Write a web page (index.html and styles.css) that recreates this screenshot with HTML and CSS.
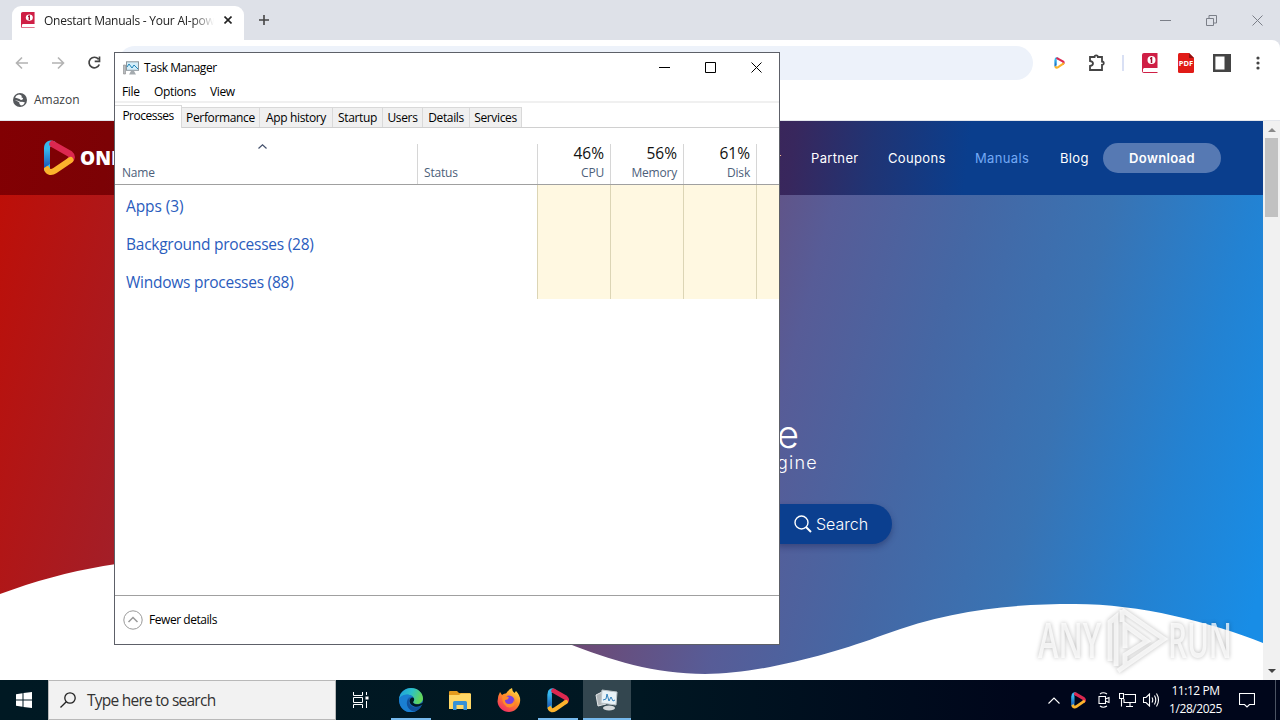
FILE: index.html
```
<!DOCTYPE html>
<html lang="en">

<head>
  <meta charset="UTF-8">
  <meta name="viewport" content="width=device-width, initial-scale=1.0">
  <title>Onestart Manuals</title>
  <link rel="stylesheet" href="styles.css">
</head>

<body>
  <!-- shared shapes -->
  <svg class="defs">
    <defs>
      <linearGradient id="lgBlue" x1="0" y1="0" x2="0" y2="1">
        <stop offset="0" stop-color="#35b8ee" />
        <stop offset="1" stop-color="#1b55b8" />
      </linearGradient>
      <linearGradient id="lgEdge" x1="0" y1="0" x2="1" y2="0.3">
        <stop offset="0" stop-color="#1d9be0" />
        <stop offset="0.55" stop-color="#2cc1c8" />
        <stop offset="1" stop-color="#62d65a" />
      </linearGradient>
      <linearGradient id="lgFox" x1="0.8" y1="0" x2="0.2" y2="1">
        <stop offset="0" stop-color="#ffe14a" />
        <stop offset="0.45" stop-color="#ff8a26" />
        <stop offset="1" stop-color="#f0246a" />
      </linearGradient>
      <symbol id="onestart" viewBox="0 0 32 36">
        <path d="M4 29V8C4 4 7 2.500 10 4" fill="none" stroke="#35b8ee" stroke-width="6" stroke-linecap="round" />
        <path d="M9.500 4L27 14C29.500 16 29 18.500 27 20" fill="none" stroke="#dc2850" stroke-width="6.500" stroke-linecap="round" />
        <path d="M27.500 20L12 30.500C8.500 33 5 32.500 4 29" fill="none" stroke="#fcb32c" stroke-width="6" stroke-linecap="round" />
        <path d="M1 9V28L7 24V9Z" fill="url(#lgBlue)" />
      </symbol>
      <symbol id="manual" viewBox="0 0 16 20">
        <path d="M2 0H15.500V15H1.500V19H15.500V20H2Q0 20 0 18V2Q0 0 2 0Z" fill="#cf1f45" />
        <rect x="1" y="16" width="14.500" height="3" fill="#fff" />
        <circle cx="9.500" cy="7" r="4" fill="#fff" />
        <path d="M9.500 4V10M8 5.500H9.500" stroke="#a3122f" stroke-width="1.500" />
      </symbol>
    </defs>
  </svg>

  <div class="browser">
    <div class="tab-strip">
      <div class="tab">
        <svg class="tab-icon" viewBox="0 0 16 20" preserveAspectRatio="none"><use href="#manual" /></svg>
        <span class="tab-title">Onestart Manuals - Your AI-pow</span>
        <svg class="tab-close" viewBox="0 0 8 8"><path d="M0.500 0.500L7.500 7.500M7.500 0.500L0.500 7.500" /></svg>
      </div>
      <svg class="tab-new" viewBox="0 0 12 12"><path d="M6 1V11M1 6H11" /></svg>
      <div class="win-buttons">
        <svg viewBox="0 0 11 11"><path d="M0 5.500H11" /></svg>
        <svg viewBox="0 0 11 11"><path d="M0.500 3.500H7.500V10.500H0.500ZM3 3V0.500H10.500V8H8" /></svg>
        <svg viewBox="0 0 11 11"><path d="M0.500 0.500L10.500 10.500M10.500 0.500L0.500 10.500" /></svg>
      </div>
    </div>

    <div class="toolbar">
      <svg class="nav-icon" viewBox="0 0 14 14"><path d="M13 7H2M7 1.500L1.500 7L7 12.500" /></svg>
      <svg class="nav-icon" viewBox="0 0 14 14"><path d="M1 7H12M7 1.500L12.500 7L7 12.500" /></svg>
      <svg class="nav-icon reload" viewBox="0 0 14 14"><path d="M11.500 3.200A5.300 5.300 0 1 0 12.300 8.500M12.500 0.500V5.300H7.700" /></svg>
      <div class="omnibox"></div>
      <div class="extensions">
        <svg class="ext-small" viewBox="0 0 32 36"><use href="#onestart" /></svg>
        <svg class="ext-puzzle" viewBox="0 0 18 18"><path d="M2 3H6.500A1.700 1.700 0 0 1 9.900 3H14V7.500A1.700 1.700 0 0 1 14 11V16H2V12Q5 11.500 5 9.500T2 7Z" /></svg>
        <span class="ext-line"></span>
        <svg class="ext-book" viewBox="0 0 16 20"><use href="#manual" /></svg>
        <svg class="ext-pdf" viewBox="0 0 16 20">
          <path d="M1.500 0H11L16 5V18.500Q16 20 14.500 20H1.500Q0 20 0 18.500V1.500Q0 0 1.500 0Z" fill="#e11b17" />
          <path d="M11 0L16 5H11Z" fill="#8f1111" />
          <text x="8" y="13" text-anchor="middle">PDF</text>
        </svg>
        <svg class="ext-panel" viewBox="0 0 18 18"><path d="M1.200 1.200H16.800V16.800H1.200Z" fill="none" stroke="#444" stroke-width="2.400" /><path d="M11.500 1H17V17H11.500Z" fill="#444" /></svg>
        <svg class="ext-menu" viewBox="0 0 4 14"><circle cx="2" cy="2" r="1.600" /><circle cx="2" cy="7" r="1.600" /><circle cx="2" cy="12" r="1.600" /></svg>
      </div>
    </div>

    <div class="bookmarks">
      <svg viewBox="0 0 14 14">
        <circle cx="7" cy="7" r="7" fill="#55585c" />
        <path d="M6 1.500Q3 2 2 4.500L6.500 6Q8 7.500 9.500 6.500Q11 5 8.500 4.500Q9.500 2 6 1.500ZM1.500 7L5 8.500Q7 9 6.500 11L8 12.500Q11 12 12 9.500Q9 8.500 8 9Q5 7.500 1.500 7Z" fill="#fff" />
      </svg>
      <span>Amazon</span>
    </div>

    <div class="viewport">
      <div class="site">
        <div class="site-header">
          <svg class="site-logo" viewBox="0 0 32 36"><use href="#onestart" /></svg>
          <span class="site-brand">ONE</span>
          <div class="site-nav">
            <span class="nav-first">r</span>
            <span class="nav-partner">Partner</span>
            <span class="nav-coupons">Coupons</span>
            <span class="nav-manuals">Manuals</span>
            <span class="nav-blog">Blog</span>
            <span class="download">Download</span>
          </div>
        </div>
        <div class="hero">
          <div class="hero-title">e</div>
          <div class="hero-sub">gine</div>
          <div class="hero-search">
            <svg viewBox="0 0 18 18"><circle cx="7.500" cy="7.500" r="6.500" /><path d="M12 12L17 17" stroke-width="2" /></svg>
            <span>Search</span>
          </div>
          <svg class="wave" viewBox="0 0 1263 140">
            <path d="M0 54C80 24 160 14 240 18C380 26 470 64 567 103C610 120 655 134 705 134C760 134 835 113 883 95C950 70 1010 64 1075 64C1140 64 1210 82 1263 103V140H0Z" fill="#fff" />
          </svg>
          <!-- ANY RUN watermark -->
          <svg class="watermark" viewBox="0 0 220 70">
            <text x="8" y="53" textLength="63" lengthAdjust="spacingAndGlyphs">ANY</text>
            <path d="M80 56V17L86 12V61M92 5L134 34L95 61V50L117 36L95 20V43M92 5V17M95 61L88 66" />
            <text x="138" y="53" textLength="64" lengthAdjust="spacingAndGlyphs">RUN</text>
          </svg>
        </div>
      </div>
      <div class="scrollbar">
        <svg viewBox="0 0 8 4"><path d="M0 4L4 0L8 4Z" fill="#8a8a8a" /></svg>
        <div class="thumb"></div>
        <svg viewBox="0 0 8 4"><path d="M0 0L4 4L8 0Z" fill="#444" /></svg>
      </div>
    </div>
  </div>

  <div class="task-manager">
    <div class="tm-title">
      <svg class="tm-icon" viewBox="0 0 16 14">
        <path d="M0.500 4H2.500V13H0.500Z" fill="#b8bcc0" stroke="#888" stroke-width="0.600" />
        <rect x="3.500" y="0.800" width="12" height="8.500" fill="#d3eefa" stroke="#8b959b" />
        <path d="M4 6L6 3L9 7L11 4L15 8" fill="none" stroke="#2185b8" />
        <path d="M8 10H11L13 13.500H6Z" fill="#a5abaf" />
      </svg>
      <span class="tm-name">Task Manager</span>
      <div class="tm-buttons">
        <svg viewBox="0 0 11 11"><path d="M0 5.500H11" /></svg>
        <svg viewBox="0 0 11 11"><path d="M0.500 0.500H10.500V10.500H0.500Z" /></svg>
        <svg viewBox="0 0 11 11"><path d="M0.500 0.500L10.500 10.500M10.500 0.500L0.500 10.500" /></svg>
      </div>
    </div>
    <div class="tm-menu">
      <span class="m-file">File</span>
      <span class="m-options">Options</span>
      <span class="m-view">View</span>
    </div>
    <div class="tm-tabs">
      <span class="tm-tab active">Processes</span>
      <span class="tm-tab t-perf">Performance</span>
      <span class="tm-tab t-app">App history</span>
      <span class="tm-tab t-start">Startup</span>
      <span class="tm-tab t-users">Users</span>
      <span class="tm-tab t-details">Details</span>
      <span class="tm-tab t-serv">Services</span>
    </div>
    <div class="tm-head">
      <div class="th name">
        <svg viewBox="0 0 9 5"><path d="M0.500 4.500L4.500 0.800L8.500 4.500" /></svg>
        <span>Name</span>
      </div>
      <div class="th status"><span>Status</span></div>
      <div class="th num"><b>46%</b><span>CPU</span></div>
      <div class="th num"><b>56%</b><span>Memory</span></div>
      <div class="th num"><b>61%</b><span>Disk</span></div>
    </div>
    <div class="tm-body">
      <div class="groups">
        <div class="g-apps">Apps (3)</div>
        <div class="g-back">Background processes (28)</div>
        <div class="g-win">Windows processes (88)</div>
      </div>
      <div class="heat"></div>
      <div class="heat"></div>
      <div class="heat"></div>
      <div class="heat last"></div>
    </div>
    <div class="tm-footer">
      <svg viewBox="0 0 20 20"><circle cx="10" cy="10" r="9.200" /><path d="M5.500 12L10 7.500L14.500 12" stroke-width="1.500" /></svg>
      <span>Fewer details</span>
    </div>
  </div>

  <div class="taskbar">
    <div class="start">
      <svg viewBox="0 0 16 16"><path d="M0 2.200L6.500 1.300V7.500H0ZM7.500 1.100L16 0V7.500H7.500ZM0 8.500H6.500V14.700L0 13.800ZM7.500 8.500H16V16L7.500 14.900Z" fill="#fff" /></svg>
    </div>
    <div class="search-box">
      <svg viewBox="0 0 16 16"><circle cx="10" cy="6" r="5.200" /><path d="M6.300 9.700L0.500 15.500" /></svg>
      <span>Type here to search</span>
    </div>
    <div class="app task-view">
      <svg viewBox="0 0 17 16" fill="none" stroke="#fff"><path d="M1.500 0V3.500H10.500V0M1.500 16V12.500H10.500V16M1.500 5.500H10.500V10.500H1.500ZM14.500 0V3M14.500 9V16" /><path d="M13.500 4.500H16.500V7.500H13.500Z" fill="#fff" stroke="none" /></svg>
    </div>
    <div class="app open">
      <svg width="24" height="24" viewBox="0 0 24 24">
        <circle cx="12" cy="12" r="12" fill="#1766b5" />
        <path d="M0 11C1 4 6 0 12 0C19 0 24 5 24 10.500C24 14 21 16 18 16C15 16 14 15 14 14C14.500 13.500 15.500 12.500 15 10.500C14 6.500 5 4.500 0 11Z" fill="url(#lgEdge)" />
        <path d="M0 11C4 5 11 6 14 9C10 8 7.500 11 8 15C8.500 20 13 23 17 22.900C8 27 0 21 0 11Z" fill="#1a7fd2" />
        <path d="M11 10C8 14 11 19 16 19.500C19 19.700 21 18.500 22.500 17.500C21 21 18 23 15 23.600C8 22 5 13 11 10Z" fill="#10519c" />
        <path d="M11.500 10.500C9.500 13 11 17 15.500 18.500C19 19.500 22 17.500 24 16V14.500C21 17 14.500 17 14 14C14.500 13.500 15.500 12.500 15 10.500C14.500 9 12.500 9 11.500 10.500Z" fill="#001923" />
      </svg>
    </div>
    <div class="app">
      <svg width="22" height="19" viewBox="0 0 22 19">
        <path d="M0 1Q0 0 1 0H8L10 2H21V6H0Z" fill="#e49b1d" />
        <path d="M0 4H10L12 2.500H22V18H0Z" fill="#ffd766" />
        <path d="M4 19V11.500Q4 10 5.500 10H16.500Q18 10 18 11.500V19H14.500V14H7.500V19Z" fill="#3691d6" />
      </svg>
    </div>
    <div class="app">
      <svg width="24" height="24" viewBox="0 0 24 24">
        <path d="M3 4L5 7Q7 5 9 5.500Q11 2 15 0Q15 3 17.500 5L19 3Q24 8 23 14C22 20 17 24 12 24C6 24 1 19.500 0.500 13.500Q0.500 8 3 4Z" fill="url(#lgFox)" />
        <circle cx="12" cy="13" r="5.500" fill="#7a3fe0" />
        <path d="M5 8Q9 7 12 9.500Q11 12 8 12Q8 16 12 16Q17 16 17 11Q20 18 13 19.500Q5 19 5 8Z" fill="#ff8a2a" />
      </svg>
    </div>
    <div class="app open">
      <svg width="24" height="25" viewBox="0 0 32 36"><use href="#onestart" /></svg>
    </div>
    <div class="app active">
      <svg width="24" height="22" viewBox="0 0 24 22">
        <path d="M1 6L9 2L11 15L3 17Z" fill="#aeb4b7" stroke="#e2e6e8" />
        <path d="M7 1L22 3L21 16L6 14Z" fill="#e9f3f8" stroke="#bcc4c8" />
        <path d="M8 11L11 10L12 5L14 12L16 8L18 12L20 11" fill="none" stroke="#3181bd" />
        <ellipse cx="14" cy="19" rx="6" ry="2.500" fill="#d4d9db" />
      </svg>
    </div>
    <div class="tray">
      <svg width="12" height="7" viewBox="0 0 12 7"><path d="M0.500 6.500L6 1L11.500 6.500" /></svg>
      <svg class="tray-one" width="15" height="17" viewBox="0 0 32 36"><use href="#onestart" /></svg>
      <svg class="tray-cam" width="12" height="16" viewBox="0 0 12 16"><path d="M1 4.500H7.500V11.500H1ZM7.500 7L11 5.500V10.500L7.500 9M2 2Q5 -0.500 9 2M2 14Q5 16.500 9 14" /></svg>
      <svg class="tray-net" width="17" height="14" viewBox="0 0 17 14"><path d="M5.500 1.500H16.500V9.500H5V6M11 9.500V13M7 13.500H14M0.500 0.500H4.500V5.500H0.500ZM2.500 5.500V13.500" /></svg>
      <svg class="tray-vol" width="17" height="14" viewBox="0 0 17 14"><path d="M0.500 4.500H3L6.500 1V13L3 9.500H0.500ZM9 4.500Q10.500 7 9 9.500M11.500 2.500Q14 7 11.500 11.500M13.500 0.500Q17.500 7 13.500 13.500" /></svg>
      <div class="clock"><span>11:12 PM</span><span>1/28/2025</span></div>
      <svg class="tray-note" width="16" height="16" viewBox="0 0 16 16"><path d="M0.500 1.500H15.500V12.500H10.500L8 15L5.500 12.500H0.500Z" /></svg>
      <div class="show-desktop"></div>
    </div>
  </div>
</body>

</html>
```
FILE: styles.css
```
* {
  box-sizing: border-box;
}

body {
  margin: 0;
  width: 1280px;
  height: 720px;
  overflow: hidden;
  display: flex;
  flex-direction: column;
  font-family: "Open Sans", "Noto Sans", sans-serif;
  font-size: 12px;
  color: #000;
}

svg {
  display: block;
  flex: none;
}

span {
  white-space: nowrap;
}

.defs {
  position: absolute;
  width: 0;
  height: 0;
}

/* browser */
.browser {
  height: 680px;
  background: #dee1e8;
  display: flex;
  flex-direction: column;
}

.tab-strip {
  height: 40px;
  display: flex;
  align-items: center;
  padding-left: 12px;
}

.tab {
  width: 232px;
  height: 34px;
  margin-top: 6px;
  padding-left: 9px;
  background: #fff;
  border-radius: 9px 9px 0 0;
  display: flex;
  align-items: center;
}

.tab-icon {
  width: 14px;
  height: 16px;
  margin-top: -6px;
}

.tab-title {
  width: 172px;
  margin: -6px 0 0 9px;
  font-size: 12px;
  letter-spacing: -0.25px;
  color: #222;
  -webkit-mask-image: linear-gradient(90deg, #000 148px, transparent 170px);
}

.tab-close {
  width: 8px;
  height: 8px;
  margin: -6px 0 0 8px;
  stroke: #222;
  stroke-width: 1.6;
}

.tab-new {
  width: 12px;
  height: 12px;
  margin-left: 14px;
  stroke: #444;
  stroke-width: 1.6;
}

.win-buttons {
  margin-left: auto;
  padding-right: 17px;
  display: flex;
  gap: 35px;
}

.win-buttons svg {
  width: 11px;
  height: 11px;
  fill: none;
  stroke: #7b7f88;
}

.toolbar {
  height: 46px;
  background: #fff;
  border-radius: 0 8px 0 0;
  display: flex;
  align-items: center;
  padding-left: 15px;
}

.nav-icon {
  width: 14px;
  height: 14px;
  margin-right: 22px;
  fill: none;
  stroke: #b3b3b3;
  stroke-width: 1.6;
}

.reload {
  margin-right: 17px;
  stroke: #444;
  stroke-width: 1.7;
}

.omnibox {
  width: 915px;
  height: 34px;
  flex: none;
  border-radius: 17px;
  background: #edf2fa;
}

.extensions {
  display: flex;
  align-items: center;
}

.ext-small {
  width: 11px;
  height: 12px;
  margin-left: 21px;
}

.ext-puzzle {
  width: 18px;
  height: 18px;
  margin-left: 23px;
  fill: none;
  stroke: #444;
  stroke-width: 1.8;
}

.ext-line {
  width: 2px;
  height: 16px;
  margin-left: 16px;
  background: #d9e0f4;
}

.ext-book {
  width: 16px;
  height: 20px;
  margin-left: 18px;
}

.ext-pdf {
  width: 16px;
  height: 20px;
  margin-left: 20px;
  font: bold 7.5px "Open Sans", sans-serif;
  fill: #fff;
}

.ext-panel {
  width: 18px;
  height: 18px;
  margin-left: 19px;
}

.ext-menu {
  width: 4px;
  height: 14px;
  margin-left: 25px;
  fill: #444;
}

.bookmarks {
  height: 35px;
  background: #fff;
  border-bottom: 1px solid #e3e6ec;
  display: flex;
  align-items: center;
  gap: 7px;
  padding: 0 0 7px 13px;
  font-size: 12px;
  color: #3c4043;
}

.bookmarks svg {
  width: 14px;
  height: 14px;
}

.viewport {
  flex: 1;
  display: flex;
}

/* site */
.site {
  width: 1263px;
  display: flex;
  flex-direction: column;
}

.site-header {
  height: 74px;
  background: linear-gradient(97deg, #820003 0, #7c0205 110px, #38275d 790px, #203474 870px, #0a3e8d 965px, #0a3e8d 100%);
  display: flex;
  align-items: center;
  padding-left: 43px;
}

.site-logo {
  width: 32px;
  height: 36px;
}

.site-brand {
  width: 50px;
  margin-left: 5px;
  font: 800 19px "Open Sans", sans-serif;
  color: #fff;
}

.site-nav {
  margin-left: auto;
  padding-right: 42px;
  display: flex;
  align-items: center;
  font: 13px Inter, sans-serif;
  letter-spacing: 0.35px;
  color: #fff;
}

.nav-first {
  width: 35px;
}

.nav-partner {
  width: 77px;
}

.nav-coupons {
  width: 87px;
}

.nav-manuals {
  width: 85px;
  color: #73a9f5;
}

.nav-blog {
  width: 43px;
}

.download {
  width: 118px;
  height: 30px;
  line-height: 31px;
  border-radius: 15px;
  background: #5679b3;
  text-align: center;
  font-weight: 600;
}

.hero {
  position: relative;
  height: 485px;
  overflow: hidden;
  padding-left: 777px;
  background: linear-gradient(105deg, #bd0f08 0%, #a51d25 14%, #6b4b78 51%, #575c97 60%, #4567a4 70%, #3973b3 80%, #2382d2 90%, #188de6 98%);
  color: #fff;
}

.hero-title {
  padding-top: 220px;
  font: 300 38px/38px Inter, sans-serif;
}

.hero-sub {
  font: 300 18px/20px Inter, sans-serif;
  letter-spacing: 1.2px;
}

.hero-search {
  width: 115px;
  height: 40px;
  margin-top: 31px;
  padding-left: 17px;
  border-radius: 0 20px 20px 0;
  background: #0b3f8f;
  box-shadow: 0 3px 6px rgba(20, 30, 80, 0.4);
  display: flex;
  align-items: center;
  gap: 4px;
  font: 300 16px Inter, sans-serif;
}

.hero-search svg {
  width: 18px;
  height: 18px;
  fill: none;
  stroke: #fff;
  stroke-width: 1.4;
}

.wave {
  position: absolute;
  left: 0;
  bottom: 0;
  width: 1263px;
  height: 140px;
}

.watermark {
  position: absolute;
  left: 1030px;
  bottom: 5px;
  width: 220px;
  height: 70px;
  overflow: visible;
  font: 600 48px "Open Sans", sans-serif;
  fill: rgba(255, 255, 255, 0.75);
  filter: drop-shadow(0 0 2px rgba(0, 0, 0, 0.35));
}

.watermark path {
  fill: none;
  stroke: rgba(255, 255, 255, 0.75);
  stroke-width: 5;
}

.scrollbar {
  width: 17px;
  background: #f1f1f1;
  display: flex;
  flex-direction: column;
  align-items: center;
  padding: 7px 0;
}

.scrollbar svg {
  width: 8px;
  height: 4px;
}

.thumb {
  width: 13px;
  height: 79px;
  margin: 6px 0 auto;
  background: #c1c1c1;
}

/* task manager */
.task-manager {
  position: absolute;
  left: 114px;
  top: 52px;
  width: 666px;
  height: 593px;
  background: #fff;
  border: 1px solid #5d6068;
  display: flex;
  flex-direction: column;
  letter-spacing: -0.35px;
}

.tm-title {
  height: 29px;
  display: flex;
  align-items: center;
  padding: 0 17px 0 8px;
}

.tm-icon {
  width: 16px;
  height: 14px;
}

.tm-name {
  margin-left: 5px;
  letter-spacing: -0.45px;
}

.tm-buttons {
  margin-left: auto;
  display: flex;
  gap: 35px;
}

.tm-buttons svg {
  width: 11px;
  height: 11px;
  fill: none;
  stroke: #000;
}

.tm-menu {
  height: 21px;
  border-bottom: 2px solid #f0f0f0;
  display: flex;
  align-items: center;
  padding-left: 7px;
}

.m-file {
  width: 32px;
}

.m-options {
  width: 56px;
}

.tm-tabs {
  height: 25px;
  border-bottom: 1px solid #d0d0d0;
  display: flex;
  align-items: flex-end;
}

.tm-tab {
  height: 20px;
  line-height: 20px;
  background: #f0f0f0;
  border: 1px solid #d9d9d9;
  border-width: 1px 1px 0 0;
  text-align: center;
}

.tm-tab.active {
  width: 67px;
  height: 23px;
  margin-bottom: -1px;
  background: #fff;
  line-height: 20px;
  letter-spacing: -0.5px;
}

.t-perf {
  width: 78px;
}

.t-app {
  width: 73px;
}

.t-start {
  width: 50px;
}

.t-users {
  width: 40px;
}

.t-details {
  width: 47px;
}

.t-serv {
  width: 52px;
}

.tm-head {
  height: 57px;
  border-bottom: 1px solid #a0a0a0;
  display: flex;
  align-items: flex-end;
  letter-spacing: -0.2px;
  color: #4c607a;
}

.th {
  height: 40px;
  border-right: 1px solid #d6d6d6;
  display: flex;
  flex-direction: column;
  justify-content: flex-end;
  padding: 0 6px 3px;
}

.th.name {
  width: 303px;
  padding-left: 7px;
  justify-content: space-between;
}

.th.name svg {
  width: 9px;
  height: 5px;
  margin: 0 0 0 136px;
  fill: none;
  stroke: #43506b;
  stroke-width: 1.2;
}

.th.status {
  width: 120px;
}

.th.num {
  width: 73px;
  text-align: right;
}

.th b {
  font-weight: 400;
  font-size: 15.5px;
  line-height: 20px;
  margin-bottom: 1px;
  letter-spacing: 0;
  color: #111;
}

.tm-body {
  height: 410px;
  display: flex;
}

.groups {
  width: 422px;
  padding: 2px 0 0 11px;
  font-size: 15.5px;
  line-height: 38px;
  letter-spacing: -0.25px;
  color: #2a5cbd;
}

.g-apps {
  letter-spacing: -0.1px;
}

.heat {
  width: 73px;
  height: 114px;
  background: #fff8e1;
  border-left: 1px solid #dcd5b5;
}

.heat.last {
  width: 23px;
}

.tm-footer {
  flex: 1;
  border-top: 1px solid #a0a0a0;
  display: flex;
  align-items: center;
  gap: 6px;
  padding: 0 0 1px 8px;
  letter-spacing: -0.45px;
}

.tm-footer svg {
  width: 20px;
  height: 20px;
  fill: none;
  stroke: #999;
}

/* taskbar */
.taskbar {
  height: 40px;
  background: linear-gradient(90deg, #001923 0, #001722 50%, #00061b 80%, #00061b 100%);
  display: flex;
  color: #fff;
}

.start {
  width: 48px;
  display: flex;
  align-items: center;
  justify-content: center;
}

.start svg {
  width: 16px;
  height: 16px;
}

.search-box {
  width: 288px;
  background: #f2f2f2;
  border: 1px solid #b9b9b9;
  display: flex;
  align-items: center;
  gap: 11px;
  padding-left: 11px;
  font-size: 15.5px;
  letter-spacing: -0.75px;
  color: #333;
}

.search-box svg {
  width: 16px;
  height: 16px;
  fill: none;
  stroke: #222;
  stroke-width: 1.3;
}

.app {
  width: 48px;
  margin-right: 1px;
  display: flex;
  align-items: center;
  justify-content: center;
}

.app.task-view {
  margin-right: 3px;
}

.task-view svg {
  width: 17px;
  height: 16px;
}

.app.open {
  background: linear-gradient(#76b9ed, #76b9ed) center bottom / 40px 2px no-repeat;
}

.app.active {
  background: #33464f;
  border-bottom: 2px solid #76b9ed;
  padding-top: 2px;
}

.tray {
  margin-left: auto;
  display: flex;
  align-items: center;
}

.tray svg {
  fill: none;
  stroke: #fff;
  stroke-width: 1.1;
}

.tray .tray-one {
  margin-left: 11px;
  stroke: none;
}

.tray .tray-cam {
  margin-left: 12px;
}

.tray .tray-net {
  margin-left: 9px;
}

.tray .tray-vol {
  margin-left: 7px;
}

.clock {
  width: 71px;
  display: flex;
  flex-direction: column;
  align-items: center;
  line-height: 18px;
  font-size: 12px;
  letter-spacing: -0.45px;
  padding-bottom: 1px;
}

.tray .tray-note {
  margin: 0 20px 0 8px;
}

.show-desktop {
  width: 5px;
  height: 40px;
  border-left: 1px solid #4b5363;
}
```
